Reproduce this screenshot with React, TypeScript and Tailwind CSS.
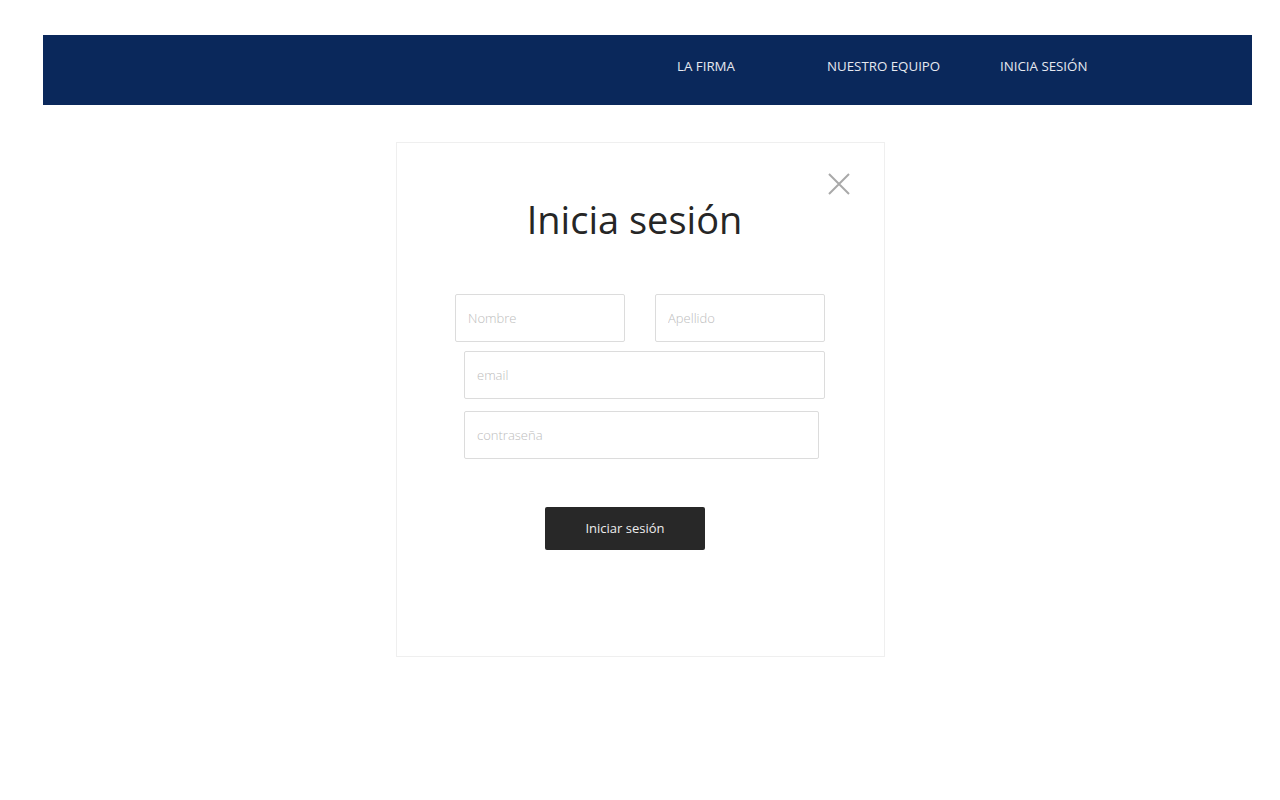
import React from "react";

const font = { fontFamily: '"Open Sans", "Liberation Sans", sans-serif' };

function Field({ placeholder, className }: { placeholder: string; className: string }) {
  return (
    <input
      type="text"
      placeholder={placeholder}
      className={`h-12 rounded-[2px] border border-[#dcdcdc] bg-white px-3 text-[13px] font-light text-[#333] placeholder:text-[#bdbdbd] outline-none ${className}`}
    />
  );
}

export default function App() {
  return (
    <div className="min-h-[800px] bg-white" style={font}>
      {/* top bar */}
      <header className="ml-[43px] mr-[28px] mt-[35px] flex h-[70px] bg-[#0a285b]">
        <nav className="ml-[634px] flex pt-[22px] text-[13.3px] leading-[18px] text-[#e6e9f0]">
          <a className="w-[150px]">LA FIRMA</a>
          <a className="w-[173px]">NUESTRO EQUIPO</a>
          <a>INICIA SESIÓN</a>
        </nav>
      </header>

      {/* login card */}
      <div className="relative ml-[396px] mt-[37px] h-[515px] w-[489px] border border-[#efefef] bg-white">
        <button className="absolute right-[34px] top-[30px] text-[#a9a9a9]" aria-label="Cerrar">
          <svg width="22" height="22" viewBox="0 0 22 22" fill="none" stroke="currentColor" strokeWidth="2">
            <path d="M1 1 L21 21 M21 1 L1 21" />
          </svg>
        </button>

        <h1 className="pr-[12px] pt-[52px] text-center text-[38px] leading-[48px] text-[#262626]">
          Inicia sesión
        </h1>

        <form className="mt-[51px] flex flex-col" onSubmit={(e) => e.preventDefault()}>
          <div className="ml-[58px] flex gap-[30px]">
            <Field placeholder="Nombre" className="w-[170px]" />
            <Field placeholder="Apellido" className="w-[170px]" />
          </div>
          <Field placeholder="email" className="ml-[67px] mt-[9px] w-[361px]" />
          <Field placeholder="contraseña" className="ml-[67px] mt-[12px] w-[355px]" />
          <button
            type="submit"
            className="ml-[148px] mt-[48px] h-[43px] w-[160px] rounded-[2px] bg-[#282828] text-[13px] text-[#ececec]"
          >
            Iniciar sesión
          </button>
        </form>
      </div>
    </div>
  );
}
